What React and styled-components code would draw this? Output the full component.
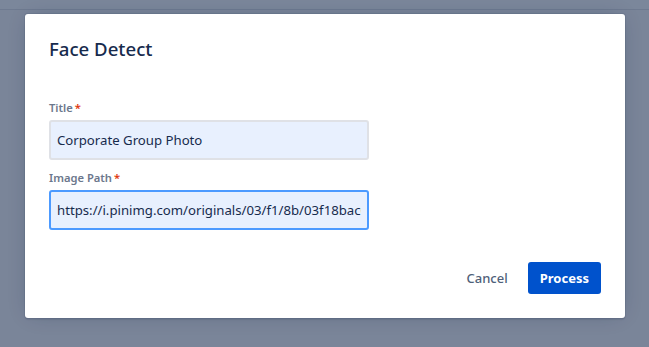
import React from 'react'
import styled, { createGlobalStyle } from 'styled-components'

const GlobalStyle = createGlobalStyle`
  html, body {
    margin: 0;
    padding: 0;
    background: #7a8599;
    font-family: "Noto Sans", "Open Sans", sans-serif;
  }
  * { box-sizing: border-box; }
`

const Page = styled.div`
  width: 649px;
  height: 347px;
  overflow: hidden;
  background: #7a8599;
`

const TopBar = styled.div`
  height: 10px;
  border-bottom: 1px solid #6e7a90;
  background: #7b879b;
`

const Dialog = styled.div`
  width: 600px;
  margin: 4px 0 0 25px;
  background: #ffffff;
  border-radius: 3px;
  box-shadow: 0 0 0 1px rgba(9, 30, 66, 0.08), 0 2px 1px rgba(9, 30, 66, 0.08),
    0 0 20px -6px rgba(9, 30, 66, 0.31);
  display: flex;
  flex-direction: column;
`

const Header = styled.div`
  padding: 23px 24px 0;
`

const Heading = styled.h1`
  margin: 0;
  font-size: 18.6px;
  line-height: 24px;
  font-weight: 500;
  color: #172b4d;
`

const Body = styled.div`
  padding: 39px 24px 0;
  display: flex;
  flex-direction: column;
`

const Field = styled.div`
  display: flex;
  flex-direction: column;
  margin-top: ${(p) => (p.$first ? '0' : '10px')};
`

const Label = styled.label`
  font-size: 11.2px;
  line-height: 16px;
  font-weight: 600;
  color: #6b778c;
  margin-bottom: 4px;
`

const Required = styled.span`
  color: #de350b;
  padding-left: 2px;
`

const Input = styled.input`
  width: 320px;
  height: 40px;
  padding: 0 6px;
  border: 2px solid ${(p) => (p.$focused ? '#4c9aff' : '#dfe1e6')};
  border-radius: 3px;
  background: #e8f0fe;
  color: #172b4d;
  font-family: inherit;
  font-size: 13.2px;
  outline: none;
`

const Footer = styled.div`
  display: flex;
  justify-content: flex-end;
  gap: 8px;
  padding: 32px 24px 24px;
`

const Button = styled.button`
  height: 32px;
  padding: 0 12px;
  border: none;
  border-radius: 3px;
  font-family: inherit;
  font-size: 13px;
  font-weight: ${(p) => (p.$primary ? 700 : 500)};
  background: ${(p) => (p.$primary ? '#0052cc' : 'transparent')};
  color: ${(p) => (p.$primary ? '#ffffff' : '#505f79')};
  cursor: pointer;
`

export default function App() {
  return (
    <Page>
      <GlobalStyle />
      <TopBar />
      <Dialog>
        <Header>
          <Heading>Face Detect</Heading>
        </Header>
        <Body>
          <Field $first>
            <Label>
              Title<Required>*</Required>
            </Label>
            <Input defaultValue="Corporate Group Photo" />
          </Field>
          <Field>
            <Label>
              Image Path<Required>*</Required>
            </Label>
            <Input
              $focused
              defaultValue="https://i.pinimg.com/originals/03/f1/8b/03f18bac0f1cbd2c1e3ed9f7a7f27d2e.jpg"
            />
          </Field>
        </Body>
        <Footer>
          <Button>Cancel</Button>
          <Button $primary>Process</Button>
        </Footer>
      </Dialog>
    </Page>
  )
}
